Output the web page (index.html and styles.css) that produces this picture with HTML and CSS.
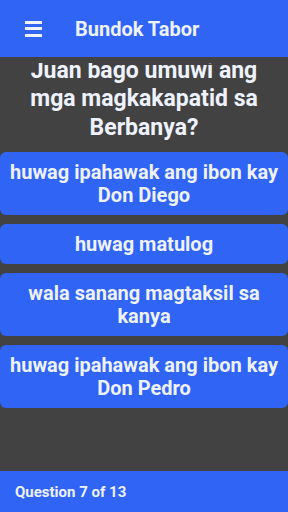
FILE: index.html
```html
<!DOCTYPE html>
<html>
<head>
<meta charset="utf-8">
<link rel="stylesheet" href="styles.css">
</head>
<body>
<div class="app">
  <header class="topbar">
    <span class="menu" aria-label="menu">
      <span class="bar"></span><span class="bar"></span><span class="bar"></span>
    </span>
    <span class="title">Bundok Tabor</span>
  </header>
  <main class="content">
    <div class="question">
      <p class="qtext">Juan bago umuwi ang mga magkakapatid sa Berbanya?</p>
    </div>
    <div class="answers">
      <button class="answer">huwag ipahawak ang ibon kay Don Diego</button>
      <button class="answer">huwag matulog</button>
      <button class="answer">wala sanang magtaksil sa kanya</button>
      <button class="answer">huwag ipahawak ang ibon kay Don Pedro</button>
    </div>
  </main>
  <footer class="bottombar">Question 7 of 13</footer>
</div>
</body>
</html>
```
FILE: styles.css
```css
* { box-sizing: border-box; }
html, body { margin: 0; padding: 0; }
body {
  width: 288px;
  height: 512px;
  overflow: hidden;
  background: #424242;
  font-family: Roboto, "Liberation Sans", sans-serif;
  color: #eef2ff;
}
.app {
  display: flex;
  flex-direction: column;
  height: 512px;
}
.topbar {
  height: 57px;
  flex: none;
  background: #3064f5;
  display: flex;
  align-items: center;
  padding-left: 25px;
}
.menu {
  display: flex;
  flex-direction: column;
  gap: 3.5px;
  width: 17px;
  margin-right: 33px;
}
.bar {
  display: block;
  height: 3px;
  background: #eef2ff;
}
.title {
  font-weight: 700;
  font-size: 20px;
}
.content {
  flex: 1;
  display: flex;
  flex-direction: column;
}
.question {
  margin-top: 6px;
  height: 79px;
  overflow: hidden;
  display: flex;
  flex-direction: column;
  justify-content: flex-end;
  padding: 0 12px;
}
.qtext {
  margin: 0;
  font-weight: 700;
  font-size: 23px;
  line-height: 28.5px;
  text-align: center;
}
.answers {
  margin-top: 10px;
  display: flex;
  flex-direction: column;
  gap: 9px;
}
.answer {
  display: block;
  width: 100%;
  border: none;
  border-radius: 6px;
  background: #3064f5;
  color: #eef2ff;
  font-family: Roboto, "Liberation Sans", sans-serif;
  font-weight: 700;
  font-size: 20px;
  line-height: 23px;
  padding: 8.5px 6px;
  text-align: center;
}
.bottombar {
  margin-top: auto;
  height: 41px;
  flex: none;
  background: #3064f5;
  display: flex;
  align-items: center;
  padding-left: 15px;
  font-weight: 700;
  font-size: 15px;
}
```
